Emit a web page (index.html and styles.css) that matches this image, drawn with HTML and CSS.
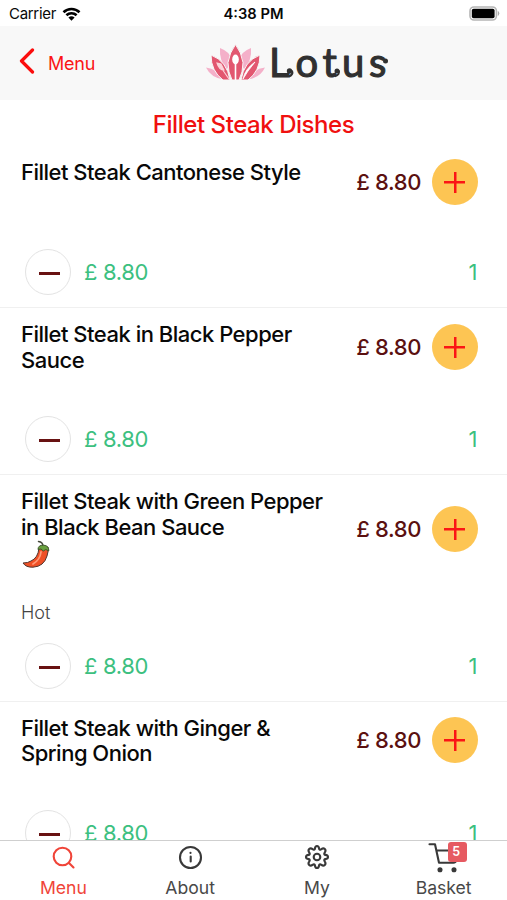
FILE: index.html
```html
<!DOCTYPE html>
<html lang="en">
<head>
    <meta charset="UTF-8">
    <meta name="viewport" content="width=device-width, initial-scale=1.0">
    <title>Lotus | Fillet Steak Dishes</title>
    <link rel="stylesheet" href="styles.css">
</head>
<body>
    <div class="status-bar">
        <div class="carrier">
            <span>Carrier</span>
            <svg width="19" height="14" viewBox="0 0 19 14">
                <path d="M1.5 5.2a11.5 11.5 0 0 1 16 0M4.4 8.3a7.4 7.4 0 0 1 10.2 0" fill="none" stroke="#000" stroke-width="2.6"/>
                <path d="M9.5 13.8 6.4 10.6a4.5 4.5 0 0 1 6.2 0z"/>
            </svg>
        </div>
        <span class="time">4:38 PM</span>
        <svg class="battery" width="31" height="15" viewBox="0 0 31 15">
            <rect x="1" y="1" width="26.4" height="13" rx="4" fill="#fff" stroke="#b5b5b5" stroke-width="1.6"/>
            <rect x="2.8" y="2.8" width="22.8" height="9.4" rx="1.8"/>
            <path d="M28.8 4.8q3 2.7 0 5.4z" fill="#aaa"/>
        </svg>
    </div>

    <header>
        <a href="#" class="back">
            <svg width="16" height="26" viewBox="0 0 16 26"><path d="M13.5 2 2.5 13l11 11" fill="none" stroke="#fb0d0d" stroke-width="3.2" stroke-linecap="round" stroke-linejoin="round"/></svg>
            <span>Menu</span>
        </a>
        <svg class="logo" width="200" height="54" viewBox="0 0 200 54">
            <g fill="#f4b0c9">
                <path d="M0 23.5q11 1 18 12Q5 34 0 23.5z"/>
                <path d="M59 23.5q-11 1-18 12 13-1.5 18-12z"/>
                <path d="M14 4q9 3 12 12l-5 9Q13 17 14 4z"/>
                <path d="M45 4q-9 3-12 12l5 9q8-8 7-21z"/>
            </g>
            <g fill="#e25770" stroke="#f8f8f8" stroke-width="1">
                <path d="M5 11q16 6 19 25h-7Q5 27 5 11z"/>
                <path d="M54 11q-16 6-19 25h7Q54 27 54 11z"/>
                <path d="M29.5.5q6 8 7.5 18 0 10-4 17.5h-7q-4-7.500-4-17.500 1.500-10 7.500-18z"/>
            </g>
            <ellipse cx="29.5" cy="15.5" rx="3.3" ry="5" fill="#fff"/>
            <path d="M29.5 20v16" stroke="#fff" stroke-width="1.6"/>
            <path d="M11 19l4 1 3 6q-5 0-7-7zM16 25l7 10" fill="#fbd4da" stroke="#fbd4da" stroke-width="1.1"/>
            <path d="M49 18l-7 9-5 8q2-10 12-17z" fill="#fff" stroke="#fff" stroke-width=".8"/>
            <text x="63 89.5 116.5 136 163" y="33" class="logo-text">Lotus</text>
            <circle cx="83.5" cy="27" r="2.7" fill="#303030"/>
            <path d="M86 26.500q1.500 4-3 6" fill="none" stroke="#303030" stroke-width="2"/>
            <circle cx="131" cy="27" r="2.500" fill="#303030"/>
            <path d="M133 26.500q1 4-4 6" fill="none" stroke="#303030" stroke-width="1.800"/>
            <circle cx="179.500" cy="17" r="2.500" fill="#303030"/>
        </svg>
    </header>

    <main>
        <h1>Fillet Steak Dishes</h1>

        <div class="item">
            <div class="item-top">
                <h2>Fillet Steak Cantonese Style</h2>
                <span class="price">£ 8.80</span>
                <button class="plus"></button>
            </div>
            <p class="note"></p>
            <div class="item-bottom">
                <button class="minus"></button>
                <span class="total">£ 8.80</span>
                <span class="count">1</span>
            </div>
        </div>

        <div class="item">
            <div class="item-top">
                <h2>Fillet Steak in Black Pepper<br>Sauce</h2>
                <span class="price">£ 8.80</span>
                <button class="plus"></button>
            </div>
            <p class="note"></p>
            <div class="item-bottom">
                <button class="minus"></button>
                <span class="total">£ 8.80</span>
                <span class="count">1</span>
            </div>
        </div>

        <div class="item">
            <div class="item-top">
                <h2>Fillet Steak with Green Pepper<br>in Black Bean Sauce
                    <svg class="chilli" width="30" height="30" viewBox="0 0 30 30">
                        <path d="M17.5 1.5q4.5.5 4.5 5" fill="none" stroke="#45483c" stroke-width="1.5" stroke-linecap="round"/>
                        <path d="M18 8q-1 10-8 13-3 2-8 2 3 4.500 10 4.200 11-.7 14-11.200 1.500-4 1-9z" fill="#ef5026" stroke="#51352e" stroke-width="1"/>
                        <path d="M20 12q-1 8-8 12" fill="none" stroke="#ff9976" stroke-width="1.8" stroke-linecap="round"/>
                        <path d="M17 9.500q0-4.500 5.500-4.300 5.500.2 5.300 5.800l-3-1.500-2.500 1.500-2.300-2z" fill="#68a03e" stroke="#40582d" stroke-width="1"/>
                    </svg>
                </h2>
                <span class="price">£ 8.80</span>
                <button class="plus"></button>
            </div>
            <p class="note hot">Hot</p>
            <div class="item-bottom">
                <button class="minus"></button>
                <span class="total">£ 8.80</span>
                <span class="count">1</span>
            </div>
        </div>

        <div class="item">
            <div class="item-top">
                <h2>Fillet Steak with Ginger &amp;<br>Spring Onion</h2>
                <span class="price">£ 8.80</span>
                <button class="plus"></button>
            </div>
            <p class="note"></p>
            <div class="item-bottom">
                <button class="minus"></button>
                <span class="total">£ 8.80</span>
                <span class="count">1</span>
            </div>
        </div>
    </main>

    <nav>
        <a href="#" class="tab active">
            <svg width="32" height="32" viewBox="0 0 32 32"><circle cx="15.5" cy="15.5" r="8.8"/><path d="m22 22 4.5 4.5"/></svg>
            <span>Menu</span>
        </a>
        <a href="#" class="tab">
            <svg width="32" height="32" viewBox="0 0 32 32"><circle cx="16.5" cy="16.5" r="10.5"/><path d="M16.7 15.5v5M16.5 11.8v.2"/></svg>
            <span>About</span>
        </a>
        <a href="#" class="tab">
            <svg width="32" height="32" viewBox="0 0 32 32"><circle cx="16" cy="16" r="3.3"/><path d="M13.9 7.7Q14.2 5 16 5t2.1 2.7q.3 1.3 1.6.8l.7-.4q2-1.4 3.4 0t0 3.4l-.4.7q-.5 1.3.8 1.7Q27 14.2 27 16t-2.8 2.1q-1.3.4-.8 1.7l.4.7q1.4 2 0 3.4t-3.4 0l-.7-.4q-1.3-.5-1.6.8Q17.8 27 16 27t-2.1-2.7q-.3-1.3-1.6-.8l-.7.4q-2 1.4-3.4 0t0-3.4l.4-.7q.5-1.3-.8-1.700Q5 17.800 5 16t2.800-2.100q1.300-.4.800-1.700l-.4-.7q-1.400-2 0-3.400t3.400 0l.7.400q1.300.5 1.600-.8z"/></svg>
            <span>My</span>
        </a>
        <a href="#" class="tab">
            <svg width="32" height="32" viewBox="0 0 32 32"><path d="M1.5 3.3H7l4 18.5h14.5q2 0 2.5-2M8.5 9.5H29"/><circle cx="12" cy="28.8" r="1.5" fill="#393939"/><circle cx="26" cy="28.8" r="1.5" fill="#393939"/></svg>
            <span class="badge">5</span>
            <span>Basket</span>
        </a>
    </nav>
</body>
</html>
```

FILE: styles.css
```css
        * {
            box-sizing: border-box;
        }

        body {
            margin: 0;
            height: 900px;
            display: flex;
            flex-direction: column;
            overflow: hidden;
            background-color: #fff;
            color: #080808;
            font-family: Inter, "Liberation Sans", sans-serif;
        }

        a {
            text-decoration: none;
        }

        .status-bar {
            height: 26px;
            flex-shrink: 0;
            display: grid;
            grid-template-columns: 1fr auto 1fr;
            align-items: center;
            padding: 1px 7px 0 9px;
            font-size: 15px;
        }

        .carrier {
            display: flex;
            align-items: center;
            gap: 6px;
            letter-spacing: -0.3px;
        }

        .time {
            margin-right: 2px;
            font-size: 14.7px;
            font-weight: 600;
        }

        .battery {
            justify-self: end;
        }

        header {
            height: 74px;
            flex-shrink: 0;
            display: flex;
            align-items: flex-start;
            background-color: #f8f8f8;
        }

        .back {
            width: 206px;
            display: flex;
            align-items: center;
            gap: 13px;
            padding: 22px 0 0 19px;
            color: #fb1515;
            font-size: 18px;
            letter-spacing: -0.2px;
        }

        .back span {
            padding-top: 4px;
        }

        .logo {
            margin-top: 18px;
        }

        .logo-text {
            font-family: Lato, sans-serif;
            font-size: 40px;
            fill: #303030;
            stroke: #303030;
            stroke-width: 1.1px;
            stroke-linejoin: round;
        }

        main {
            flex: 1;
            min-height: 0;
            overflow: hidden;
        }

        h1 {
            margin: 0;
            height: 46px;
            line-height: 49px;
            text-align: center;
            font-size: 24px;
            font-weight: 500;
            letter-spacing: -0.45px;
            color: #f01010;
        }

        .item {
            padding: 13px 29px 12px 21px;
            border-bottom: 1px solid #f0f0f0;
        }

        .item-top {
            display: flex;
            align-items: center;
            min-height: 46px;
        }

        .item h2 {
            flex: 1;
            align-self: flex-start;
            margin: 1px 0 -1px;
            white-space: nowrap;
            font-size: 22px;
            line-height: 25.5px;
            font-weight: 500;
            letter-spacing: -0.5px;
        }

        .chilli {
            display: block;
        }

        .price {
            margin-right: 11px;
            font-size: 22px;
            font-weight: 500;
            letter-spacing: -0.4px;
            color: #5b1010;
        }

        button {
            width: 46px;
            height: 46px;
            flex-shrink: 0;
            border-radius: 50%;
            padding: 0;
        }

        /* The plus and minus signs are drawn with gradients */
        .plus {
            border: none;
            background: linear-gradient(#fb1515, #fb1515) 12px 22px / 21px 2.5px no-repeat,
                        linear-gradient(#fb1515, #fb1515) 21.5px 13px / 2.5px 21px no-repeat,
                        #fdc553;
        }

        .minus {
            border: 1.5px solid #e3e3e3;
            background: linear-gradient(#681212, #681212) 13px 22px / 21px 3px no-repeat, #fff;
        }

        .note {
            margin: 0;
            height: 44px;
            font-size: 18px;
            font-weight: 300;
            color: #444;
        }

        .hot {
            height: 73.5px;
            padding-top: 33px;
            line-height: 22px;
        }

        .item-bottom {
            display: flex;
            align-items: center;
            padding-left: 4px;
            font-size: 22px;
            letter-spacing: -0.35px;
            color: #3cc080;
        }

        .total {
            margin-left: 13px;
        }

        .count {
            margin-left: auto;
            margin-right: 1px;
        }

        nav {
            height: 60px;
            flex-shrink: 0;
            display: grid;
            grid-template-columns: repeat(4, 1fr);
            border-top: 1px solid #cfcfcf;
            background-color: #fff;
        }

        .tab {
            position: relative;
            display: flex;
            flex-direction: column;
            align-items: center;
            color: #484848;
            font-size: 17.6px;
            line-height: 30px;
        }

        .tab svg {
            fill: none;
            stroke: #393939;
            stroke-width: 2.1;
            stroke-linecap: round;
            stroke-linejoin: round;
        }

        .active {
            color: #f04438;
        }

        .active svg {
            stroke: #f04438;
        }

        .badge {
            position: absolute;
            top: 1px;
            left: 68px;
            width: 19px;
            height: 20px;
            border-radius: 3px;
            background-color: #e65a61;
            color: #fff;
            font-size: 12.5px;
            font-weight: 600;
            line-height: 20px;
            text-align: center;
            padding-right: 3px;
        }
```
